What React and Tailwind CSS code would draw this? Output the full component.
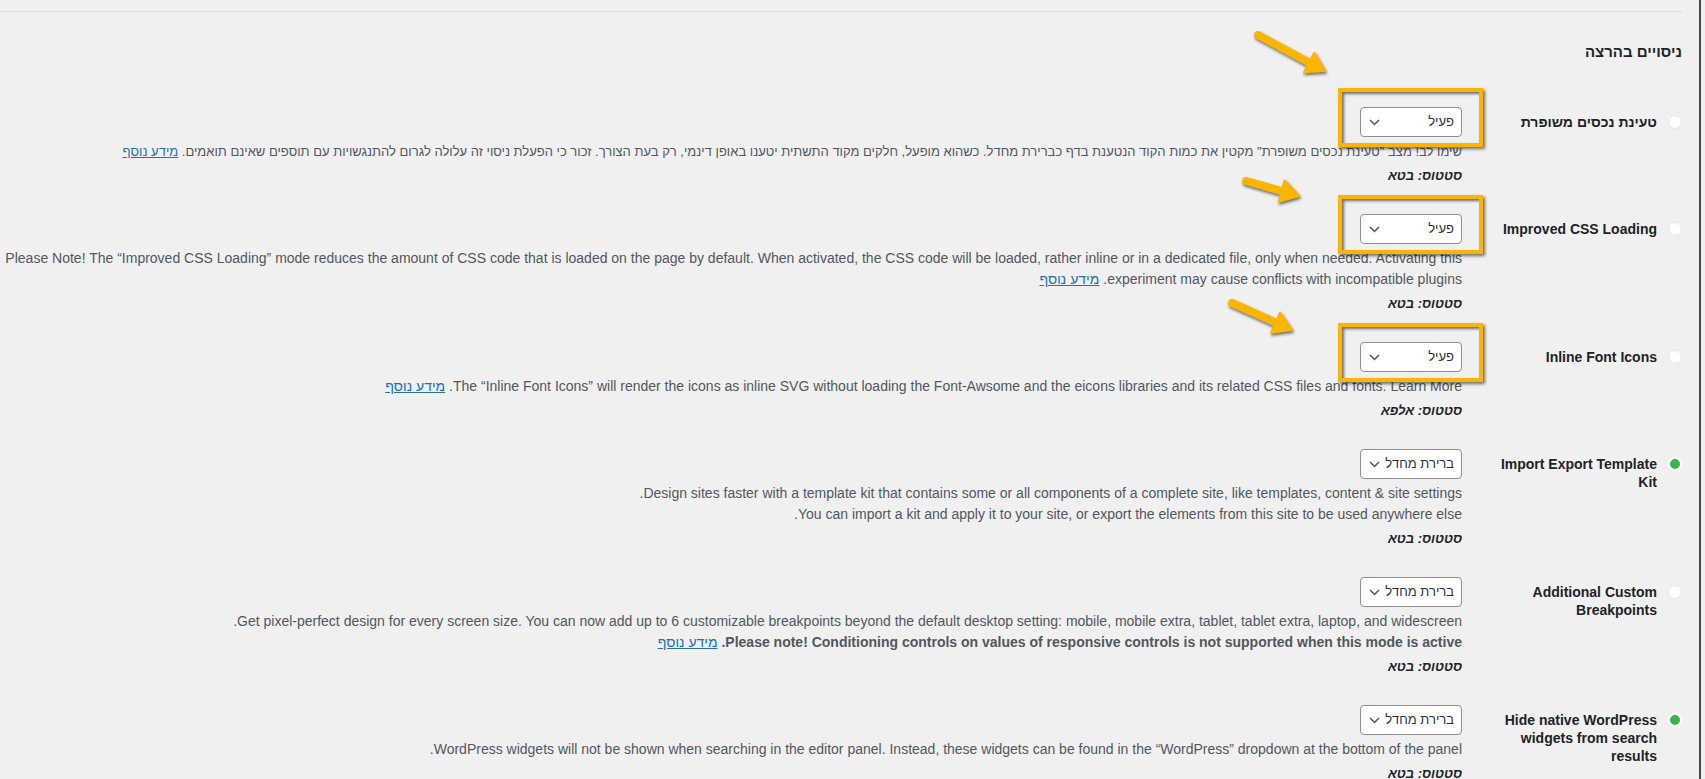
import React from 'react';

const YELLOW = '#FBB500';

const rows = [
  {
    title: 'טעינת נכסים משופרת',
    active: false,
    value: 'פעיל',
    marked: true,
    status: 'סטטוס: בטא',
    descSize: 'text-[13px]',
    desc: (
      <p>
        שימו לב! מצב "טעינת נכסים משופרת" מקטין את כמות הקוד הנטענת בדף כברירת מחדל. כשהוא מופעל, חלקים מקוד התשתית יטענו באופן דינמי, רק בעת הצורך. זכור כי הפעלת ניסוי זה עלולה לגרום להתנגשויות עם תוספים שאינם תואמים.{' '}
        <a href="#" className="text-[#2271b1] underline">מידע נוסף</a>
      </p>
    ),
  },
  {
    title: 'Improved CSS Loading',
    active: false,
    value: 'פעיל',
    marked: true,
    status: 'סטטוס: בטא',
    desc: (
      <p>
        Please Note! The “Improved CSS Loading” mode reduces the amount of CSS code that is loaded on the page by default. When activated, the CSS code will be loaded, rather inline or in a dedicated file, only when needed. Activating this experiment may cause conflicts with incompatible plugins.{' '}
        <a href="#" className="text-[#2271b1] underline">מידע נוסף</a>
      </p>
    ),
  },
  {
    title: 'Inline Font Icons',
    active: false,
    value: 'פעיל',
    marked: true,
    status: 'סטטוס: אלפא',
    desc: (
      <p>
        The “Inline Font Icons” will render the icons as inline SVG without loading the Font-Awsome and the eicons libraries and its related CSS files and fonts. Learn More.{' '}
        <a href="#" className="text-[#2271b1] underline">מידע נוסף</a>
      </p>
    ),
  },
  {
    title: 'Import Export Template Kit',
    active: true,
    value: 'ברירת מחדל',
    status: 'סטטוס: בטא',
    desc: (
      <>
        <p>Design sites faster with a template kit that contains some or all components of a complete site, like templates, content &amp; site settings.</p>
        <p>You can import a kit and apply it to your site, or export the elements from this site to be used anywhere else.</p>
      </>
    ),
  },
  {
    title: 'Additional Custom Breakpoints',
    active: false,
    value: 'ברירת מחדל',
    status: 'סטטוס: בטא',
    desc: (
      <>
        <p>Get pixel-perfect design for every screen size. You can now add up to 6 customizable breakpoints beyond the default desktop setting: mobile, mobile extra, tablet, tablet extra, laptop, and widescreen.</p>
        <p>
          <strong>Please note! Conditioning controls on values of responsive controls is not supported when this mode is active.</strong>{' '}
          <a href="#" className="text-[#2271b1] underline">מידע נוסף</a>
        </p>
      </>
    ),
  },
  {
    title: 'Hide native WordPress widgets from search results',
    active: true,
    value: 'ברירת מחדל',
    status: 'סטטוס: בטא',
    desc: (
      <p>WordPress widgets will not be shown when searching in the editor panel. Instead, these widgets can be found in the “WordPress” dropdown at the bottom of the panel.</p>
    ),
  },
];

// annotation arrows, page coordinates [tailX, tailY, tipX, tipY]
const arrows = [
  [1258, 35, 1325, 71],
  [1246, 181, 1299, 196],
  [1232, 303, 1292, 330],
];

const Arrow = ({ a }) => {
  const [x1, y1, x2, y2] = a;
  const len = Math.hypot(x2 - x1, y2 - y1);
  const ux = (x2 - x1) / len;
  const uy = (y2 - y1) / len;
  const bx = x2 - ux * 18;
  const by = y2 - uy * 18;
  const nx = -uy * 11;
  const ny = ux * 11;
  return (
    <g>
      <line x1={x1} y1={y1} x2={bx + ux * 2} y2={by + uy * 2} stroke={YELLOW} strokeWidth="8" strokeLinecap="round" />
      <polygon points={`${x2},${y2} ${bx + nx},${by + ny} ${bx - nx},${by - ny}`} fill={YELLOW} stroke={YELLOW} strokeWidth="2" strokeLinejoin="round" />
    </g>
  );
};

const Chevron = () => (
  <svg width="11" height="7" viewBox="0 0 11 7" fill="none" className="shrink-0">
    <path d="M1 1l4.5 4.5L10 1" stroke="#50575e" strokeWidth="1.5" />
  </svg>
);

const Select = ({ value, marked }) => (
  <div className="relative w-[102px]">
    <div className="h-[30px] bg-white border border-[#8c8f94] rounded-[4px] flex items-center justify-between pr-[7px] pl-[8px] text-[13px] text-[#2c3338] whitespace-nowrap">
      <span>{value}</span>
      <Chevron />
    </div>
    {marked && (
      <div className="absolute -left-[22px] -right-[21px] -top-[19px] -bottom-[10px] border-4 border-[#FBB500] pointer-events-none shadow-[2px_2px_3px_rgba(0,0,0,0.55),inset_2px_2px_3px_rgba(0,0,0,0.55)]" />
    )}
  </div>
);

const Row = ({ row }) => (
  <div className="flex pt-[14px] pb-[14px]">
    <div className="w-[220px] shrink-0 flex items-start gap-[11px]">
      <span
        className={
          row.active
            ? 'mt-[8px] w-[14px] h-[14px] rounded-full bg-[#39b54a] border-2 border-white shrink-0'
            : 'mt-[8px] w-[14px] h-[14px] rounded-full bg-white border border-[#e6e6e8] shrink-0'
        }
      />
      <div className="w-[160px] mt-[6px] text-[14px] leading-[18px] font-bold text-[#1d2327]">{row.title}</div>
    </div>
    <div className="flex-1">
      <Select value={row.value} marked={row.marked} />
      <div className={`mt-[4px] leading-[21px] text-[#50575e] ${row.descSize || 'text-[14px]'}`}>{row.desc}</div>
      <div className="mt-[3px] text-[13px] leading-[21px] font-bold italic text-[#1d2327]">{row.status}</div>
    </div>
  </div>
);

export default function App() {
  return (
    <div className="relative w-[1705px] h-[779px] overflow-hidden bg-[#f0f0f1] flex font-['Liberation_Sans',Arial,sans-serif]">
      <div dir="rtl" className="w-[1699px] shrink-0 pr-[17px]">
        <div className="mt-[11px] border-t border-[#dcdcde]" />
        <h2 className="mt-[30px] text-[15px] leading-[20px] font-bold text-[#1d2327]">ניסויים בהרצה</h2>
        <div className="mt-[31px]">
          {rows.map((row) => (
            <Row key={row.title} row={row} />
          ))}
        </div>
      </div>
      <div className="flex-1 border-l-2 border-[#4a4a4a] bg-[#f0f0f1]" />
      <svg
        className="absolute inset-0 pointer-events-none drop-shadow-[1px_2px_1.5px_rgba(0,0,0,0.55)]"
        width="1705"
        height="779"
        viewBox="0 0 1705 779"
      >
        {arrows.map((a, i) => (
          <Arrow key={i} a={a} />
        ))}
      </svg>
    </div>
  );
}
